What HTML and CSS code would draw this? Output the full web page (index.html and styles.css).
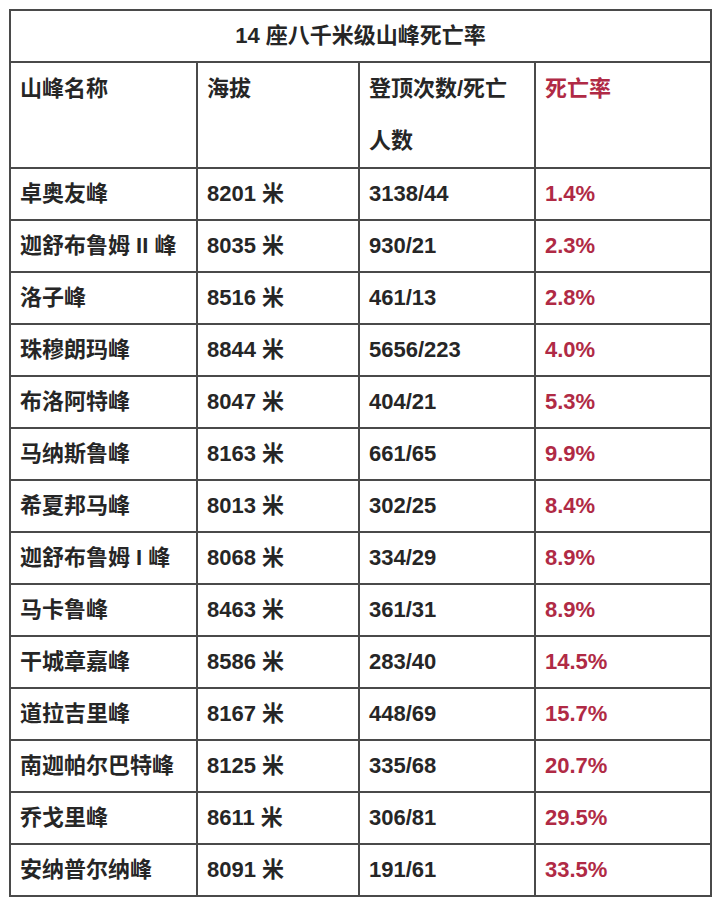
FILE: index.html
```html
<!DOCTYPE html>
<html lang="zh-CN">
<head>
<meta charset="utf-8">
<title>14 座八千米级山峰死亡率</title>
<link rel="stylesheet" href="styles.css">
</head>
<body>
<table class="peaks">
  <colgroup>
    <col class="c1"><col class="c2"><col class="c3"><col class="c4">
  </colgroup>
  <tr class="title-row"><td colspan="4" class="title">14 座八千米级山峰死亡率</td></tr>
  <tr class="head-row">
    <td>山峰名称</td>
    <td>海拔</td>
    <td>登顶次数/死亡<br>人数</td>
    <td class="red">死亡率</td>
  </tr>
  <tr><td>卓奥友峰</td><td>8201 米</td><td>3138/44</td><td class="red">1.4%</td></tr>
  <tr><td>迦舒布鲁姆 II 峰</td><td>8035 米</td><td>930/21</td><td class="red">2.3%</td></tr>
  <tr><td>洛子峰</td><td>8516 米</td><td>461/13</td><td class="red">2.8%</td></tr>
  <tr><td>珠穆朗玛峰</td><td>8844 米</td><td>5656/223</td><td class="red">4.0%</td></tr>
  <tr><td>布洛阿特峰</td><td>8047 米</td><td>404/21</td><td class="red">5.3%</td></tr>
  <tr><td>马纳斯鲁峰</td><td>8163 米</td><td>661/65</td><td class="red">9.9%</td></tr>
  <tr><td>希夏邦马峰</td><td>8013 米</td><td>302/25</td><td class="red">8.4%</td></tr>
  <tr><td>迦舒布鲁姆 I 峰</td><td>8068 米</td><td>334/29</td><td class="red">8.9%</td></tr>
  <tr><td>马卡鲁峰</td><td>8463 米</td><td>361/31</td><td class="red">8.9%</td></tr>
  <tr><td>干城章嘉峰</td><td>8586 米</td><td>283/40</td><td class="red">14.5%</td></tr>
  <tr><td>道拉吉里峰</td><td>8167 米</td><td>448/69</td><td class="red">15.7%</td></tr>
  <tr><td>南迦帕尔巴特峰</td><td>8125 米</td><td>335/68</td><td class="red">20.7%</td></tr>
  <tr><td>乔戈里峰</td><td>8611 米</td><td>306/81</td><td class="red">29.5%</td></tr>
  <tr><td>安纳普尔纳峰</td><td>8091 米</td><td>191/61</td><td class="red">33.5%</td></tr>
</table>
</body>
</html>
```
FILE: styles.css
```css
html, body {
  margin: 0;
  background: #ffffff;
}
body {
  padding: 9px 0 0 9px;
}
.peaks {
  border-collapse: collapse;
  table-layout: fixed;
  width: 701px;
  font-family: "Liberation Sans", "Noto Sans CJK SC", sans-serif;
  font-size: 22px;
  font-weight: 700;
  color: #262626;
  background: #ffffff;
}
.c1 { width: 187px; }
.c2 { width: 162px; }
.c3 { width: 176px; }
.c4 { width: 176px; }
.peaks td {
  border: 2px solid #4a4a4a;
  padding: 0 0 0 9px;
  height: 50px;
  line-height: 50px;
  vertical-align: top;
  white-space: nowrap;
  box-sizing: border-box;
}
.peaks .title {
  text-align: center;
  padding: 0;
}
.peaks .head-row td {
  height: 102px;
  line-height: 52px;
}
.peaks .red {
  color: #b02a45;
}
```
